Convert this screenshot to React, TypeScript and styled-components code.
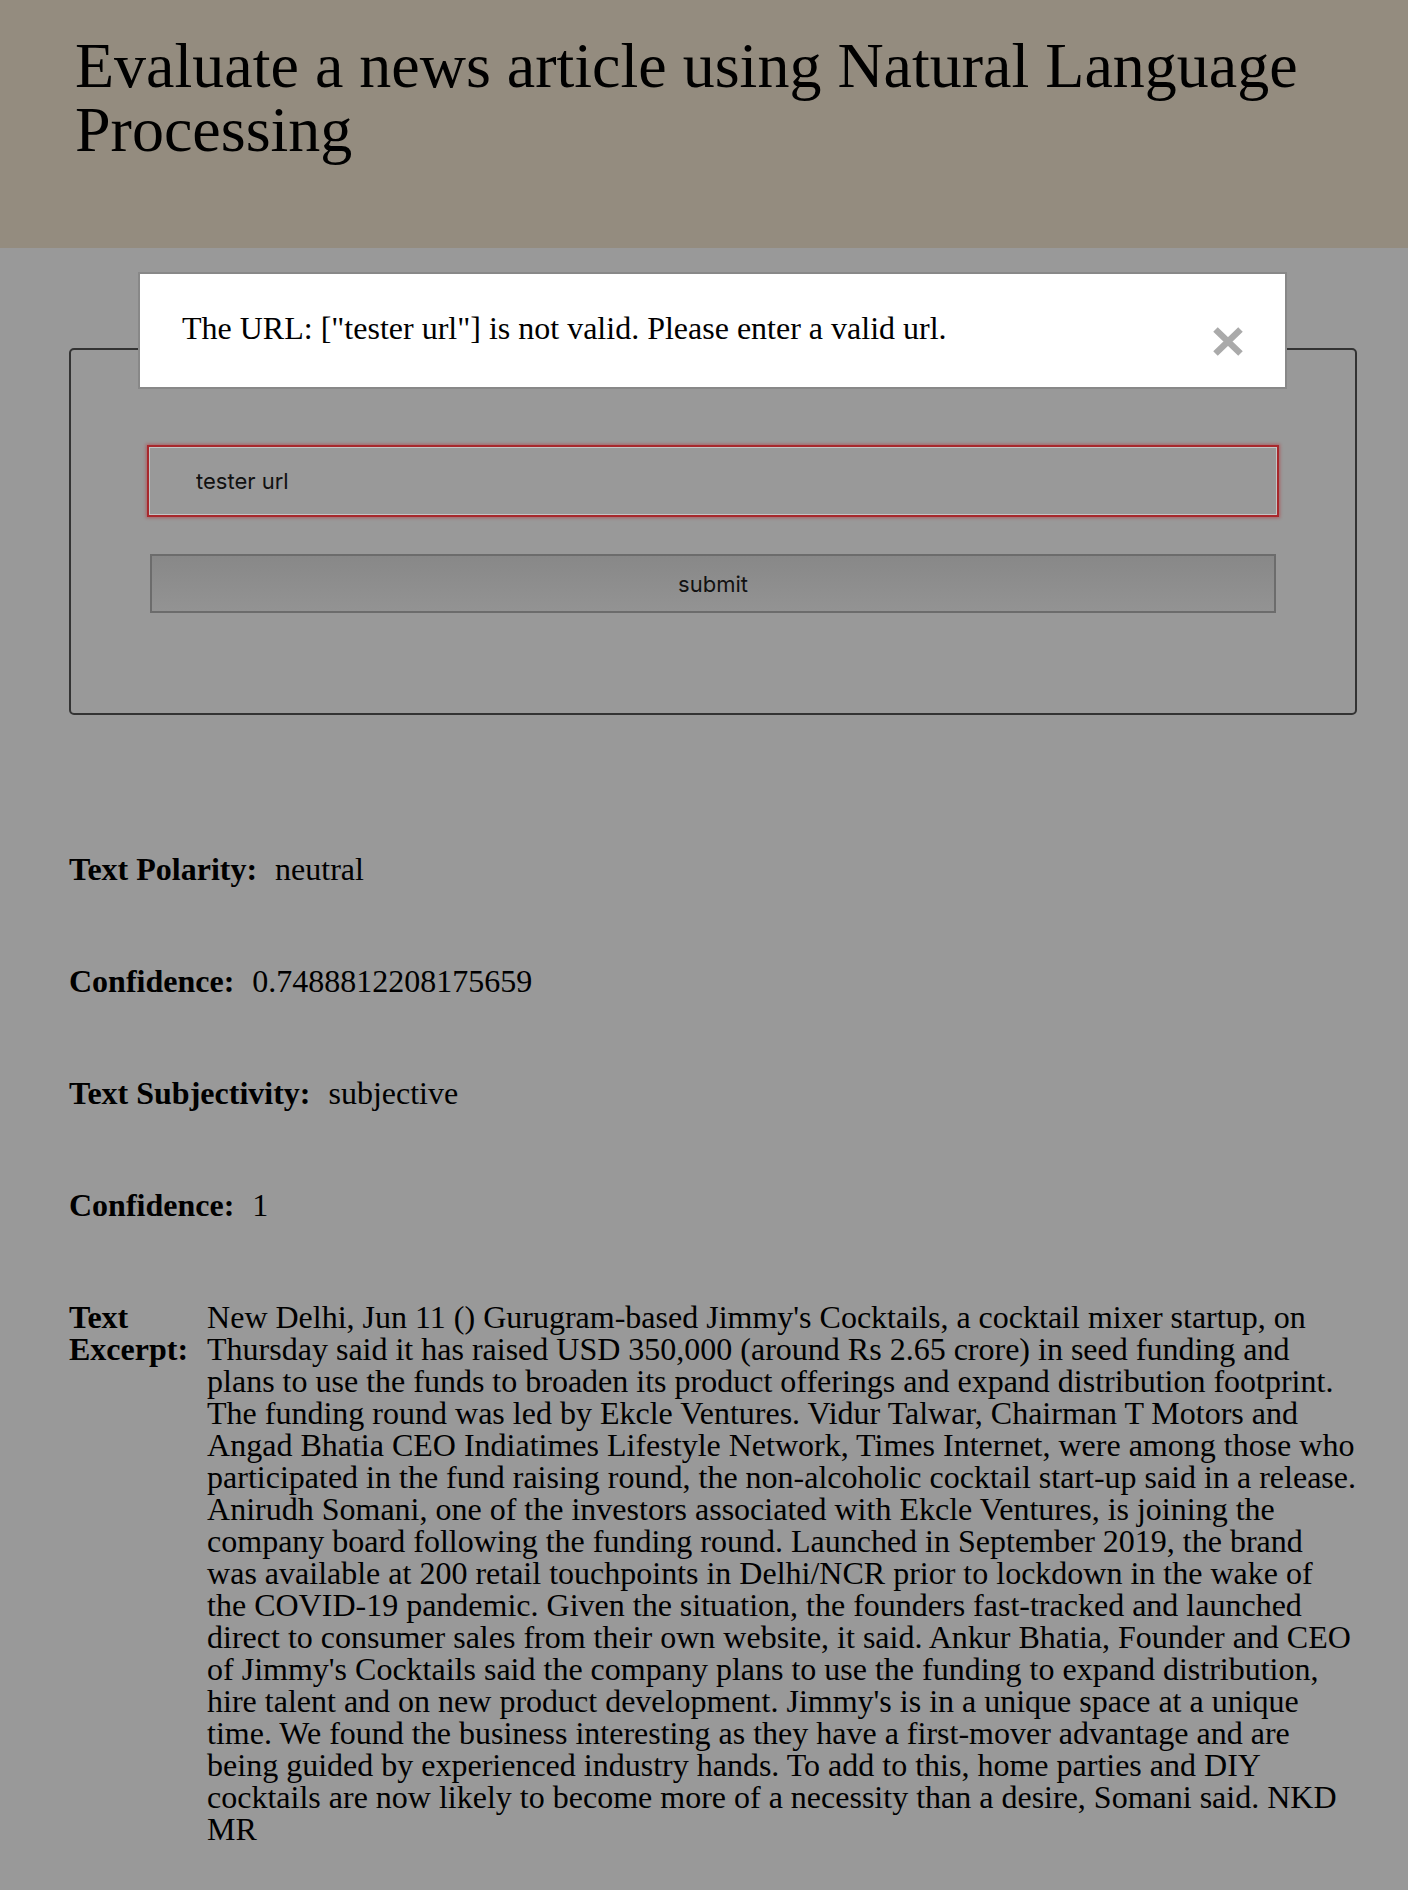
import React from "react";
import styled, { createGlobalStyle } from "styled-components";

const GlobalStyle = createGlobalStyle`
  html, body {
    margin: 0;
    padding: 0;
    background: #999999;
  }
  body {
    font-family: "Liberation Serif", "Times New Roman", serif;
    color: #000;
  }
  *, *::before, *::after {
    box-sizing: border-box;
  }
`;

const Header = styled.header`
  background: #948c7f;
  height: 248px;
  padding: 34px 75px 0 75px;
`;

const Title = styled.h1`
  margin: 0;
  font-size: 64px;
  line-height: 64px;
  font-weight: normal;
`;

const Main = styled.main`
  padding: 0 51px 48px 69px;
`;

const FormSection = styled.section`
  position: relative;
  padding-top: 100px;
`;

const Alert = styled.div`
  position: absolute;
  top: 24px;
  left: 69px;
  right: 70px;
  height: 117px;
  background: #ffffff;
  border: 2px solid #888888;
  display: flex;
  justify-content: space-between;
  align-items: flex-start;
  padding: 36px 42px 0 42px;
  z-index: 2;
`;

const AlertText = styled.p`
  margin: 0;
  font-size: 32px;
  line-height: 36px;
`;

const CloseButton = styled.button`
  margin-top: 17px;
  padding: 0;
  border: none;
  background: none;
  width: 30px;
  height: 29px;
  display: flex;
  cursor: pointer;
`;

const Form = styled.form`
  border: 2px solid #333333;
  border-radius: 5px;
  padding: 97px 78px 100px 78px;
  display: flex;
  flex-direction: column;
  gap: 39px;
`;

const UrlInput = styled.input`
  height: 68px;
  width: 100%;
  background: transparent;
  border: 1px solid #c4c4c4;
  box-shadow: 0 0 0 2px #a8282c, 0 0 3px 3px rgba(190, 30, 40, 0.45);
  padding: 0 0 0 46px;
  font-family: Inter, "Noto Sans", sans-serif;
  font-size: 22px;
  color: #111;
  outline: none;
`;

const SubmitButton = styled.button`
  height: 59px;
  margin: 0 1px;
  border: 2px solid #6c6c6c;
  background: linear-gradient(#888888, #939393);
  font-family: Inter, "Noto Sans", sans-serif;
  font-size: 22px;
  color: #111;
  cursor: pointer;
`;

const Results = styled.div`
  margin-top: 138px;
  display: flex;
  flex-direction: column;
  gap: 80px;
`;

const Row = styled.div<{ $gap?: number }>`
  display: flex;
  align-items: flex-start;
  gap: ${(p) => p.$gap ?? 18}px;
  font-size: 32px;
  line-height: 32px;
`;

const Label = styled.strong<{ $narrow?: boolean }>`
  font-weight: bold;
  flex-shrink: 0;
  ${(p) => (p.$narrow ? "width: min-content;" : "white-space: nowrap;")}
`;

const Value = styled.span`
  flex: 1;
  min-width: 0;
`;

const excerpt =
  "New Delhi, Jun 11 () Gurugram-based Jimmy's Cocktails, a cocktail mixer startup, on Thursday said it has raised USD 350,000 (around Rs 2.65 crore) in seed funding and plans to use the funds to broaden its product offerings and expand distribution footprint. The funding round was led by Ekcle Ventures. Vidur Talwar, Chairman T Motors and Angad Bhatia CEO Indiatimes Lifestyle Network, Times Internet, were among those who participated in the fund raising round, the non-alcoholic cocktail start-up said in a release. Anirudh Somani, one of the investors associated with Ekcle Ventures, is joining the company board following the funding round. Launched in September 2019, the brand was available at 200 retail touchpoints in Delhi/NCR prior to lockdown in the wake of the COVID-19 pandemic. Given the situation, the founders fast-tracked and launched direct to consumer sales from their own website, it said. Ankur Bhatia, Founder and CEO of Jimmy's Cocktails said the company plans to use the funding to expand distribution, hire talent and on new product development. Jimmy's is in a unique space at a unique time. We found the business interesting as they have a first-mover advantage and are being guided by experienced industry hands. To add to this, home parties and DIY cocktails are now likely to become more of a necessity than a desire, Somani said. NKD MR";

const results: { label: string; value: string }[] = [
  { label: "Text Polarity:", value: "neutral" },
  { label: "Confidence:", value: "0.7488812208175659" },
  { label: "Text Subjectivity:", value: "subjective" },
  { label: "Confidence:", value: "1" },
];

export default function App() {
  return (
    <>
      <GlobalStyle />
      <Header>
        <Title>Evaluate a news article using Natural Language Processing</Title>
      </Header>
      <Main>
        <FormSection>
          <Alert role="alert">
            <AlertText>The URL: ["tester url"] is not valid. Please enter a valid url.</AlertText>
            <CloseButton type="button" aria-label="close">
              <svg width="30" height="29" viewBox="0 0 30 29">
                <path
                  d="M2.5 2.5 L27.5 26.5 M27.5 2.5 L2.5 26.5"
                  stroke="#aaaaaa"
                  strokeWidth="6.5"
                  strokeLinecap="butt"
                  fill="none"
                />
              </svg>
            </CloseButton>
          </Alert>
          <Form onSubmit={(e) => e.preventDefault()}>
            <UrlInput type="text" defaultValue="tester url" />
            <SubmitButton type="submit">submit</SubmitButton>
          </Form>
        </FormSection>
        <Results>
          {results.map((r, i) => (
            <Row key={i}>
              <Label>{r.label}</Label>
              <Value>{r.value}</Value>
            </Row>
          ))}
          <Row $gap={19}>
            <Label $narrow>Text Excerpt:</Label>
            <Value>{excerpt}</Value>
          </Row>
        </Results>
      </Main>
    </>
  );
}
